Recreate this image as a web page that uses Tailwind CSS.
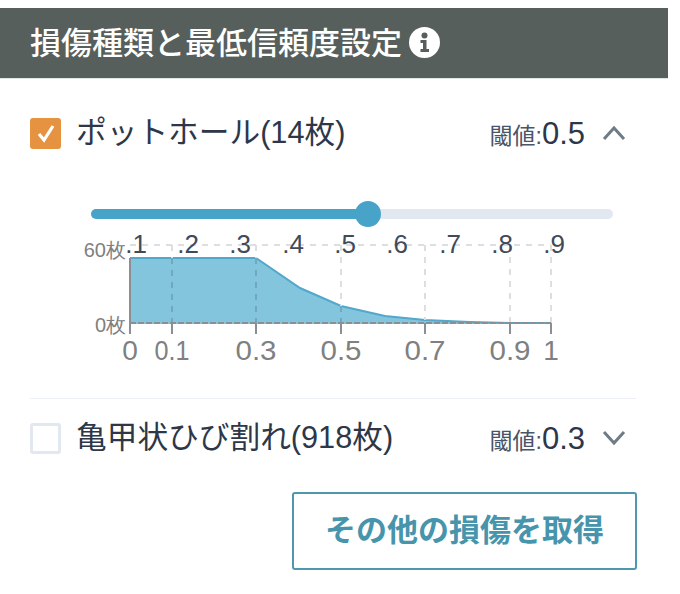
<!DOCTYPE html>
<html lang="ja">
 <head>
  <meta charset="utf-8"/>
  <title>損傷種類と最低信頼度設定</title>
  <script src="https://cdn.jsdelivr.net/npm/@tailwindcss/browser@4"></script>
 </head>
 <body class="bg-white font-['Liberation_Sans','Noto_Sans_CJK_JP',sans-serif]">
  <div class="w-[668px] pt-2">
   <!-- header -->
   <div class="h-[71px] bg-[#565f5b] border-b border-[#dfe6e4] flex items-center pl-[30px] gap-[7px]">
    <span class="text-[31px] text-white font-medium leading-none">損傷種類と最低信頼度設定</span>
    <svg class="w-[31px] h-[31px] mb-[2px]" viewBox="0 0 31 31">
     <circle cx="15.5" cy="15.5" r="15.5" fill="#fff"/>
     <circle cx="15.5" cy="8.5" r="3" fill="#565f5b"/>
     <path d="M11.5 13h6v9h2.500v3h-8.500v-3h2.500v-6h-2.500z" fill="#565f5b"/>
    </svg>
   </div>

   <div class="pl-[30px] pr-[32px]">
    <!-- pothole row -->
    <div class="flex items-center h-[32px] mt-[38px]">
     <div class="w-[31px] h-[31px] rounded-[3px] bg-[#e59340] flex items-center justify-center">
      <svg class="w-[20px] h-[20px]" viewBox="0 0 20 20" fill="none" stroke="#fff" stroke-width="3.200">
       <path d="M3 11l5 6 9-14"/>
      </svg>
     </div>
     <span class="ml-[15px] text-[30.700px] leading-none text-[#2d3748]">ポットホール(14枚)</span>
     <div class="ml-auto flex items-center">
      <span class="text-[23px] text-[#4a5568] leading-none mt-[6px]">閾値:</span>
      <span class="text-[31px] text-[#2d3748] leading-none">0.5</span>
      <svg class="w-[24px] h-[24px] ml-[17px] mr-[10px]" viewBox="0 0 24 24" fill="none" stroke="#6f7b85" stroke-width="3">
       <path d="M2 18L12 7l10 11"/>
      </svg>
     </div>
    </div>

    <!-- slider -->
    <div class="relative mt-[60px] ml-[61px] w-[522px] h-[10px] rounded-full bg-[#e2e8f0]">
     <div class="h-[10px] w-[277px] rounded-full bg-[#48a3c9]"></div>
     <div class="absolute left-[264px] top-[-8px] w-[26px] h-[26px] rounded-full bg-[#48a3c9]"></div>
    </div>

    <!-- chart -->
    <svg class="block mt-[10px] ml-[40px]" width="540" height="145" viewBox="70 229 540 145" font-family="Liberation Sans">
     <path d="M130 258H256L300 288 341 306 385 316 425 320 470 322 510 323H551V324H130Z" fill="#84c5de"/>
     <path d="M130 258H256L300 288 341 306 385 316 425 320 470 322 510 323H551" fill="none" stroke="#52a8cb" stroke-width="2"/>
     <g stroke="#dcdee0" stroke-width="2" stroke-dasharray="6 6" fill="none">
      <path d="M130 245H551"/>
      <path d="M172 245V258M256 245V258M341 245V306M425 245V320M510 245V323M551 245V323"/>
     </g>
     <path d="M172 258V323M256 258V323M341 306V323" stroke="#6fa8bf" stroke-width="2" stroke-dasharray="6 6" fill="none"/>
     <path d="M130 323H551" stroke="#8a8f94" stroke-width="2" stroke-dasharray="6 2"/>
     <path d="M130 258V334" stroke="#8a8f94" stroke-width="2"/>
     <path d="M172 323V334M256 323V334M341 323V334M425 323V334M510 323V334M551 323V334" stroke="#8a8f94" stroke-width="2"/>
     <g fill="#808080" font-size="20" text-anchor="end">
      <text x="126" y="257">60枚</text>
      <text x="126" y="332">0枚</text>
     </g>
     <g fill="#808080" font-size="28" text-anchor="middle">
      <text x="130" y="360">0</text>
      <text x="172" y="360" textLength="35" lengthAdjust="spacingAndGlyphs">0.1</text>
      <text x="256" y="360" textLength="41" lengthAdjust="spacingAndGlyphs">0.3</text>
      <text x="341" y="360" textLength="41" lengthAdjust="spacingAndGlyphs">0.5</text>
      <text x="425" y="360" textLength="41" lengthAdjust="spacingAndGlyphs">0.7</text>
      <text x="510" y="360" textLength="41" lengthAdjust="spacingAndGlyphs">0.9</text>
      <text x="551" y="360">1</text>
     </g>
     <g fill="#3f4a5a" font-size="26" text-anchor="middle">
      <text x="136" y="253">.1</text>
      <text x="188" y="253">.2</text>
      <text x="240" y="253">.3</text>
      <text x="293" y="253">.4</text>
      <text x="345" y="253">.5</text>
      <text x="397" y="253">.6</text>
      <text x="450" y="253">.7</text>
      <text x="502" y="253">.8</text>
      <text x="554" y="253">.9</text>
     </g>
    </svg>

    <div class="border-t border-[#edf0f5] mt-[24px] w-[606px]"></div>

    <!-- alligator crack row -->
    <div class="flex items-center h-[32px] mt-[23px]">
     <div class="w-[31px] h-[31px] rounded-[3px] border-[3px] border-[#e2e8f0] bg-white"></div>
     <span class="ml-[15px] text-[30.700px] leading-none text-[#2d3748]">亀甲状ひび割れ(918枚)</span>
     <div class="ml-auto flex items-center">
      <span class="text-[23px] text-[#4a5568] leading-none mt-[6px]">閾値:</span>
      <span class="text-[31px] text-[#2d3748] leading-none">0.3</span>
      <svg class="w-[24px] h-[24px] ml-[17px] mr-[10px]" viewBox="0 0 24 24" fill="none" stroke="#6f7b85" stroke-width="3">
       <path d="M2 6l10 11L22 6"/>
      </svg>
     </div>
    </div>

    <!-- fetch button -->
    <div class="flex justify-end mt-[38px] w-[607px]">
     <button class="w-[345px] h-[78px] rounded-[3px] border-2 border-[#4f97ad] bg-white text-[#4795ac] text-[31px] font-bold">その他の損傷を取得</button>
    </div>
   </div>
  </div>
 </body>
</html>
